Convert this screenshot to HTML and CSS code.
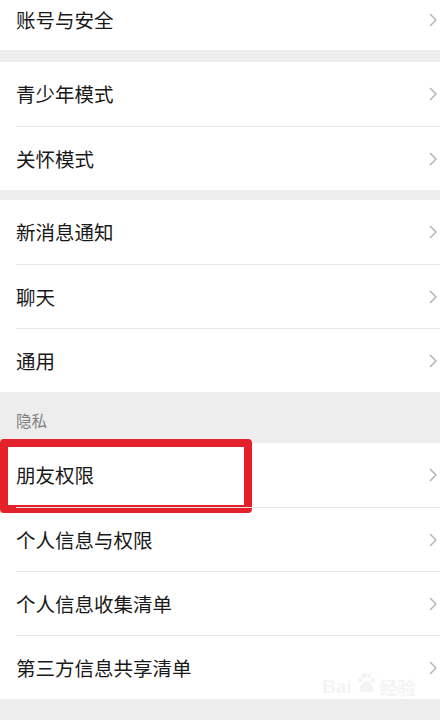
FILE: index.html
```html
<!DOCTYPE html>
<html lang="zh-CN">
<head>
  <meta charset="UTF-8">
  <meta name="viewport" content="width=device-width, initial-scale=1.0">
  <title>设置</title>
  <link rel="stylesheet" href="styles.css">
</head>
<body>

  <div class="settings">
    <!-- Account -->
    <div class="group group-top">
      <div class="row row-cut">
        <div class="row-body">
          <span class="label">账号与安全</span>
          <svg class="chevron" viewBox="0 0 8 14"><polyline points="1,1 7,7 1,13"/></svg>
        </div>
      </div>
    </div>

    <div class="group gap-12">
      <div class="row">
        <div class="row-body">
          <span class="label">青少年模式</span>
          <svg class="chevron" viewBox="0 0 8 14"><polyline points="1,1 7,7 1,13"/></svg>
        </div>
      </div>
      <div class="row">
        <div class="row-body">
          <span class="label">关怀模式</span>
          <svg class="chevron" viewBox="0 0 8 14"><polyline points="1,1 7,7 1,13"/></svg>
        </div>
      </div>
    </div>

    <div class="group gap-10">
      <div class="row">
        <div class="row-body">
          <span class="label">新消息通知</span>
          <svg class="chevron" viewBox="0 0 8 14"><polyline points="1,1 7,7 1,13"/></svg>
        </div>
      </div>
      <div class="row">
        <div class="row-body">
          <span class="label">聊天</span>
          <svg class="chevron" viewBox="0 0 8 14"><polyline points="1,1 7,7 1,13"/></svg>
        </div>
      </div>
      <div class="row">
        <div class="row-body">
          <span class="label">通用</span>
          <svg class="chevron" viewBox="0 0 8 14"><polyline points="1,1 7,7 1,13"/></svg>
        </div>
      </div>
    </div>

    <!-- Privacy -->
    <div class="section-title">隐私</div>
    <div class="group">
      <div class="row row-marked">
        <div class="mark"></div>
        <div class="row-body">
          <span class="label">朋友权限</span>
          <svg class="chevron" viewBox="0 0 8 14"><polyline points="1,1 7,7 1,13"/></svg>
        </div>
      </div>
      <div class="row">
        <div class="row-body">
          <span class="label">个人信息与权限</span>
          <svg class="chevron" viewBox="0 0 8 14"><polyline points="1,1 7,7 1,13"/></svg>
        </div>
      </div>
      <div class="row">
        <div class="row-body">
          <span class="label">个人信息收集清单</span>
          <svg class="chevron" viewBox="0 0 8 14"><polyline points="1,1 7,7 1,13"/></svg>
        </div>
      </div>
      <div class="row">
        <div class="row-body">
          <span class="label">第三方信息共享清单</span>
          <svg class="chevron" viewBox="0 0 8 14"><polyline points="1,1 7,7 1,13"/></svg>
        </div>
      </div>
    </div>
  </div>

  <!-- watermark -->
  <div class="watermark">
    <span class="wm-bai">Bai</span>
    <svg class="wm-paw" viewBox="0 0 24 24">
      <ellipse cx="6" cy="9" rx="2.2" ry="2.8"/>
      <ellipse cx="10" cy="4.5" rx="2.2" ry="2.8"/>
      <ellipse cx="15" cy="4.5" rx="2.2" ry="2.8"/>
      <ellipse cx="19" cy="9" rx="2.2" ry="2.8"/>
      <path d="M12.5 10c-3 0-7 5-7 8.5 0 2.5 2.5 3 7 3s7-.5 7-3c0-3.5-4-8.5-7-8.5z"/>
    </svg>
    <span class="wm-jy">经验</span>
  </div>

</body>
</html>
```

FILE: styles.css
```css
body {
  margin: 0;
  background-color: #ededed;
  font-family: "Noto Sans CJK SC", "Noto Sans", sans-serif;
  color: #191919;
  width: 440px;
  height: 720px;
  overflow: hidden;
  position: relative;
}

.settings {
  display: flex;
  flex-direction: column;
}

.group {
  background-color: #fff;
}

.gap-12 {
  margin-top: 12px;
}

.gap-10 {
  margin-top: 10px;
}

.row {
  padding-left: 16px;
  position: relative;
}

.row-body {
  display: flex;
  align-items: center;
  justify-content: space-between;
  height: 64px;
  padding-right: 3px;
  box-sizing: border-box;
}

.row + .row .row-body {
  border-top: 1px solid #e6e6e6;
}

/* the first row is cut by the top of the screen */
.row-cut .row-body {
  height: 50px;
  padding-bottom: 10px;
}

.label {
  font-size: 19.5px;
  line-height: 1;
}

.chevron {
  width: 8px;
  height: 14px;
  fill: none;
  stroke: #b4b4b4;
  stroke-width: 1.5;
}

.section-title {
  height: 51px;
  box-sizing: border-box;
  padding: 21px 16px 0;
  font-size: 15.5px;
  line-height: 1;
  color: #808080;
}

/* red highlight box */
.mark {
  position: absolute;
  left: 0;
  top: -4px;
  width: 252px;
  height: 74px;
  box-sizing: border-box;
  border: 8px solid #e4202a;
  border-radius: 4px;
}

.watermark {
  position: absolute;
  left: 322px;
  top: 670px;
  display: flex;
  align-items: flex-end;
  gap: 2px;
  opacity: 0.35;
  color: #e2e2e2;
}

.wm-bai {
  font-family: "Liberation Sans", sans-serif;
  font-size: 19px;
  font-weight: bold;
  line-height: 1;
}

.wm-paw {
  width: 24px;
  height: 26px;
  fill: #e2e2e2;
}

.wm-jy {
  font-size: 18px;
  font-weight: bold;
  line-height: 1;
}
```
